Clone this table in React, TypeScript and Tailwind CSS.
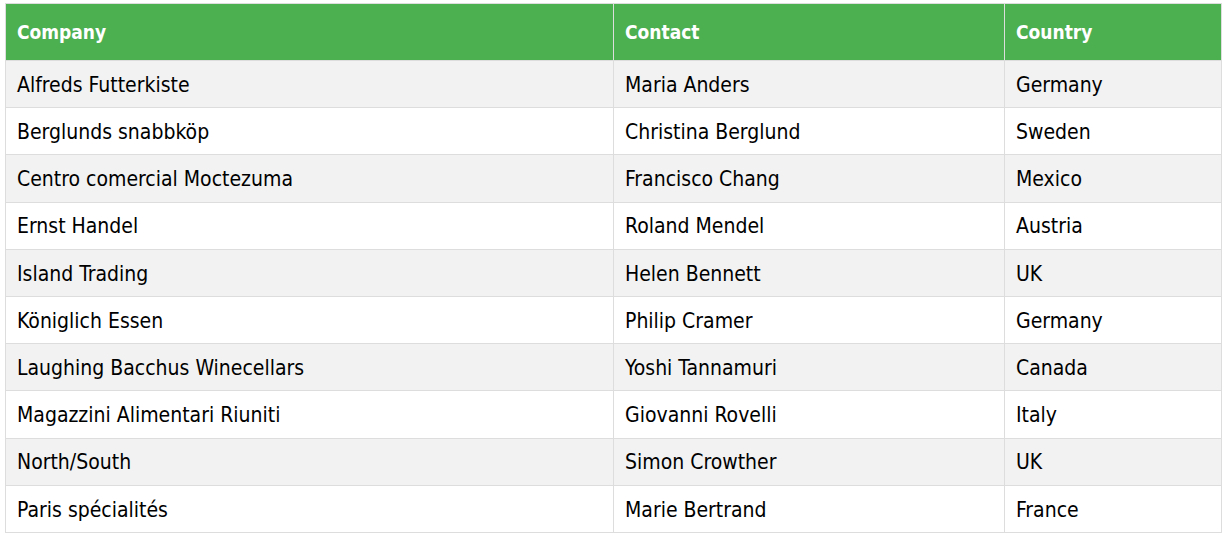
import React from "react";

type Customer = {
  company: string;
  contact: string;
  country: string;
};

const customers: Customer[] = [
  { company: "Alfreds Futterkiste", contact: "Maria Anders", country: "Germany" },
  { company: "Berglunds snabbköp", contact: "Christina Berglund", country: "Sweden" },
  { company: "Centro comercial Moctezuma", contact: "Francisco Chang", country: "Mexico" },
  { company: "Ernst Handel", contact: "Roland Mendel", country: "Austria" },
  { company: "Island Trading", contact: "Helen Bennett", country: "UK" },
  { company: "Königlich Essen", contact: "Philip Cramer", country: "Germany" },
  { company: "Laughing Bacchus Winecellars", contact: "Yoshi Tannamuri", country: "Canada" },
  { company: "Magazzini Alimentari Riuniti", contact: "Giovanni Rovelli", country: "Italy" },
  { company: "North/South", contact: "Simon Crowther", country: "UK" },
  { company: "Paris spécialités", contact: "Marie Bertrand", country: "France" },
];

export default function App() {
  return (
    <div className="min-h-[543px] bg-white pl-[5px] pt-[3px] font-['DejaVu_Sans_Condensed','DejaVu_Sans',sans-serif] text-[21px] text-black">
      <table className="w-[1216px] table-fixed border-collapse">
        <colgroup>
          <col className="w-[608px]" />
          <col className="w-[391px]" />
          <col className="w-[217px]" />
        </colgroup>
        <thead>
          <tr className="bg-[#4caf50] text-[19px] text-white">
            <th className="h-[57px] border border-[#ddd] px-[11px] text-left font-bold">Company</th>
            <th className="h-[57px] border border-[#ddd] px-[11px] text-left font-bold">Contact</th>
            <th className="h-[57px] border border-[#ddd] px-[11px] text-left font-bold">Country</th>
          </tr>
        </thead>
        <tbody>
          {customers.map((c, i) => (
            <tr key={c.company} className={i % 2 === 0 ? "bg-[#f2f2f2]" : "bg-white"}>
              <td className="h-[47.2px] border border-[#ddd] px-[11px] pt-[3px]">{c.company}</td>
              <td className="h-[47.2px] border border-[#ddd] px-[11px] pt-[3px]">{c.contact}</td>
              <td className="h-[47.2px] border border-[#ddd] px-[11px] pt-[3px]">{c.country}</td>
            </tr>
          ))}
        </tbody>
      </table>
    </div>
  );
}
